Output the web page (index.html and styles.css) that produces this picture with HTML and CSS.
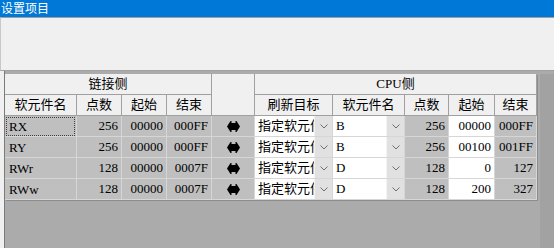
FILE: index.html
```html
<!DOCTYPE html>
<html lang="zh-CN">
<head>
  <meta charset="UTF-8">
  <title>设置项目</title>
  <link rel="stylesheet" href="styles.css">
</head>
<body>

<div class="titlebar">设置项目</div>
<div class="toolbar"></div>

<div class="grid-area">
  <div class="grid">
    <!-- 表头第一行 -->
    <div class="c h span4">链接侧</div>
    <div class="c h rows2"></div>
    <div class="c h span5">CPU侧</div>
    <!-- 表头第二行 -->
    <div class="c h">软元件名</div>
    <div class="c h">点数</div>
    <div class="c h">起始</div>
    <div class="c h">结束</div>
    <div class="c h">刷新目标</div>
    <div class="c h">软元件名</div>
    <div class="c h">点数</div>
    <div class="c h">起始</div>
    <div class="c h">结束</div>
  </div>
  <div class="strip"></div>
</div>

<script>
  // 刷新参数
  const rows = [
    { dev: 'RX',  pts: 256, start: '00000', end: '000FF', cpuDev: 'B', cpuPts: 256, cpuStart: '00000', cpuEnd: '000FF' },
    { dev: 'RY',  pts: 256, start: '00000', end: '000FF', cpuDev: 'B', cpuPts: 256, cpuStart: '00100', cpuEnd: '001FF' },
    { dev: 'RWr', pts: 128, start: '00000', end: '0007F', cpuDev: 'D', cpuPts: 128, cpuStart: '0',     cpuEnd: '127' },
    { dev: 'RWw', pts: 128, start: '00000', end: '0007F', cpuDev: 'D', cpuPts: 128, cpuStart: '200',   cpuEnd: '327' }
  ];

  const arrow = `<svg width="13" height="11" viewBox="0 0 13 11"><path d="M0 5.5 L3.5 0 L4.5 0 L4.5 2 L8.5 2 L8.5 0 L9.5 0 L13 5.5 L9.5 11 L8.5 11 L8.5 9 L4.5 9 L4.5 11 L3.5 11 Z" fill="#000"/></svg>`;
  const chevron = `<svg width="8" height="5" viewBox="0 0 8 5"><path d="M0.5 0.5 L4 4 L7.5 0.5" fill="none" stroke="#707070" stroke-width="1"/></svg>`;

  const grid = document.querySelector('.grid');
  rows.forEach((r, i) => {
    grid.insertAdjacentHTML('beforeend', `
      <div class="c d left"><span class="${i === 0 ? 'focus' : ''}">${r.dev}</span></div>
      <div class="c d num">${r.pts}</div>
      <div class="c d num">${r.start}</div>
      <div class="c d num">${r.end}</div>
      <div class="c d icon">${arrow}</div>
      <div class="c w combo"><span class="txt">指定软元件</span><span class="drop">${chevron}</span></div>
      <div class="c w combo"><span class="txt">${r.cpuDev}</span><span class="drop">${chevron}</span></div>
      <div class="c d num">${r.cpuPts}</div>
      <div class="c w num">${r.cpuStart}</div>
      <div class="c d num">${r.cpuEnd}</div>
    `);
  });
</script>

</body>
</html>
```

FILE: styles.css
```css
body {
  margin: 0;
  padding: 0;
  width: 554px;
  height: 248px;
  overflow: hidden;
  background-color: #f0f0f0;
  font-family: "Liberation Serif", "Noto Sans CJK SC", serif;
  font-size: 13px;
  color: #000;
}
.titlebar {
  height: 17px;
  line-height: 16px;
  padding-left: 1px;
  background-color: #0078d7;
  color: #fff;
  font-family: "Noto Sans CJK SC", sans-serif;
  font-size: 12px;
}
.toolbar {
  height: 52px;
  border-top: 1px solid #a0a0a0;
  border-bottom: 1px solid #a0a0a0;
  border-left: 1px solid #c8c8c8;
}
.grid-area {
  display: flex;
  margin-left: 4px;
  height: 174px;
  padding-top: 3px;
  border-left: 1px solid #7a7a7a;
  background-color: #ababab;
}
.strip {
  width: 14px;
  margin-left: auto;
  background-color: #a2a2a2;
}
.grid {
  display: grid;
  grid-template-columns: 72px 45px 45px 45px 43px 78px 72px 44px 46px 42px;
  grid-auto-rows: 21px;
  align-self: flex-start;
  box-shadow: 1px 1px 0 #8c8c8c;
}
.c {
  box-sizing: border-box;
  border-right: 1px solid #d6d6d6;
  border-bottom: 1px solid #d6d6d6;
  line-height: 20px;
  white-space: nowrap;
  overflow: hidden;
}
.h {
  background-color: #f0f0f0;
  border-color: #a0a0a0;
  text-align: center;
}
.span4 {
  grid-column: span 4;
}
.span5 {
  grid-column: span 5;
}
.rows2 {
  grid-row: span 2;
}
.d {
  background-color: #bfbfbf;
}
.w {
  background-color: #fff;
}
.num {
  text-align: right;
  padding-right: 3px;
}
.left {
  padding: 1px 1px 0 1px;
  line-height: 17px;
}
.left span {
  display: block;
  height: 17px;
  padding-left: 2px;
  border: 1px dotted transparent;
}
.left span.focus {
  border-color: #404040;
}
.icon {
  display: flex;
  align-items: center;
  justify-content: center;
}
.combo {
  display: flex;
}
.combo .txt {
  flex: 1;
  overflow: hidden;
  padding-left: 3px;
  font-family: "Liberation Serif", "Noto Sans CJK SC", sans-serif;
}
.combo .drop {
  width: 17px;
  display: flex;
  align-items: center;
  justify-content: center;
  background-color: #e1e1e1;
  border-left: 1px solid #f4f4f4;
}
```
